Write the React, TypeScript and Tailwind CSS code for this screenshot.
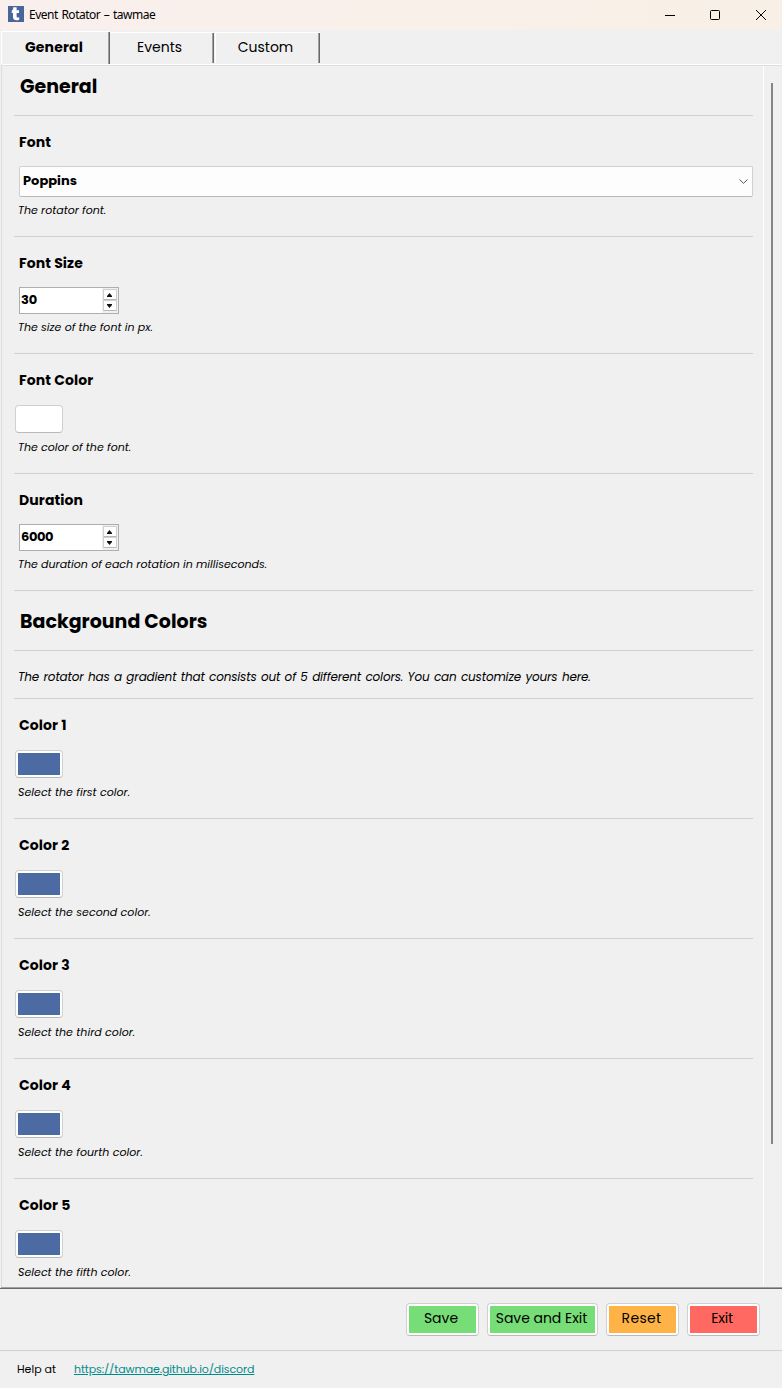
import type { ReactNode } from "react";

function Rule() {
  return <div className="h-px w-[739px] shrink-0 bg-[#d0d0d0]" />;
}

function Heading({ children, className }: { children: ReactNode; className: string }) {
  return (
    <h2 className={`flex shrink-0 items-center pl-[6px] text-[19px] leading-none font-bold ${className}`}>
      {children}
    </h2>
  );
}

interface FieldProps {
  label: string;
  hint: string;
  hintClass?: string;
  className: string;
  children: ReactNode;
}

function Field({ label, hint, hintClass = "", className, children }: FieldProps) {
  return (
    <section className={`flex shrink-0 flex-col ${className}`}>
      <div className="flex h-[50px] shrink-0 items-center pt-px pl-[5px] text-[14px] leading-none font-bold tracking-[0.1px]">
        {label}
      </div>
      {children}
      <p className={`flex h-[26px] shrink-0 items-center pl-[4px] text-[11px] leading-none whitespace-nowrap italic ${hintClass}`}>
        {hint}
      </p>
    </section>
  );
}

function Spinner({ value, valueClass }: { value: string; valueClass: string }) {
  return (
    <div className="ml-[5px] flex h-[27px] w-[100px] shrink-0 items-center justify-between border border-[#adadb3] bg-white">
      <span className={`-mt-[3px] pl-px text-[13px] leading-none font-bold ${valueClass}`}>{value}</span>
      <div className="flex h-[25px] w-[16px] flex-col bg-[#f0f0f0] p-px">
        <div className="flex h-[11px] items-center rounded-[1px] border border-[#d0d0d0] border-b-[#b8b8b8] bg-[#fdfdfd] pl-[3px]">
          <svg width="5" height="4" viewBox="0 0 5 4"><path d="M2.5 0 5 3V4H0V3Z" fill="#111" /></svg>
        </div>
        <div className="flex h-[11px] items-center rounded-[1px] border border-[#d0d0d0] border-b-[#b8b8b8] bg-[#fdfdfd] pl-[3px]">
          <svg width="5" height="4" viewBox="0 0 5 4"><path d="M0 0H5V1L2.5 4 0 1Z" fill="#111" /></svg>
        </div>
      </div>
    </div>
  );
}

function Swatch({ fill }: { fill: string }) {
  return (
    <div className="mt-px ml-px flex h-[28px] w-[48px] shrink-0 rounded-[4px] border border-[#d0d0d0] border-b-[#bababa] bg-white p-[2px]">
      <div className={`flex-1 ${fill}`} />
    </div>
  );
}

function ActionButton({ label, className, fill }: { label: string; className: string; fill: string }) {
  return (
    <button className={`flex h-[33px] rounded-[4px] border border-[#d0d0d0] border-b-[#bababa] bg-white p-[2px] ${className}`}>
      <span className={`flex h-full flex-1 items-center justify-center pb-[3px] text-[14px] leading-none whitespace-nowrap ${fill}`}>
        {label}
      </span>
    </button>
  );
}

function TabEdge() {
  return (
    <span className="flex w-[2px] shrink-0 self-stretch">
      <span className="w-px bg-[#a0a0a0]" />
      <span className="w-px bg-[#696969]" />
    </span>
  );
}

const colors = [
  { name: "Color 1", hint: "Select the first color." },
  { name: "Color 2", hint: "Select the second color." },
  { name: "Color 3", hint: "Select the third color." },
  { name: "Color 4", hint: "Select the fourth color." },
  { name: "Color 5", hint: "Select the fifth color." },
];

export default function App() {
  return (
    <div className="flex h-[1388px] w-[782px] flex-col overflow-hidden bg-[#f0f0f0] font-['Poppins','Inter',sans-serif] text-black [font-feature-settings:'cv11','ss03']">
      <header className="flex h-[30px] shrink-0 items-center bg-linear-to-r from-[#f9f0ee] via-[#f9f0ea] to-[#f8f0e6] pl-[8px]">
        <svg width="16" height="16" viewBox="0 0 16 16" className="-mt-[2px]">
          <rect width="16" height="16" fill="#48669c" />
          <path d="M5.2 1.3H8.6V4.3H11V6.9H8.6V10.2C8.6 11.6 9.6 11.8 11.2 11.2V13.7C8 15 5 14.2 5 11V6.9H3.7V4.8C4.8 4.3 5.2 3 5.2 1.3Z" fill="#fff" />
        </svg>
        <h1 className="ml-[5px] flex-1 text-[12px] leading-none tracking-[-0.5px] [word-spacing:1px] font-['Segoe_UI','Noto_Sans',sans-serif]">
          Event Rotator – tawmae
        </h1>
        <div className="flex items-center">
          <svg width="10" height="10" viewBox="0 0 10 10" className="mr-[35px]" fill="none" stroke="#000"><path d="M0 5.5H10" /></svg>
          <svg width="10" height="10" viewBox="0 0 10 10" className="mr-[36px]" fill="none" stroke="#000"><rect x=".5" y=".5" width="9" height="9" rx="1" /></svg>
          <svg width="10" height="10" viewBox="0 0 10 10" className="mr-[16px]" fill="none" stroke="#000"><path d="M0 0 10 10M10 0 0 10" /></svg>
        </div>
      </header>

      <nav className="flex h-[34px] shrink-0 items-end pl-px text-[14px] leading-none">
        <div className="flex h-[33px] w-[109px] border-t border-l border-t-white border-l-white">
          <span className="flex flex-1 items-center justify-center pr-[2px] pb-[3px] font-bold tracking-[0.15px]">General</span>
          <TabEdge />
        </div>
        <div className="mb-px flex h-[31px] w-[104px] border-t border-t-white">
          <span className="flex flex-1 items-center justify-center pr-[3px] pb-[3px]">Events</span>
          <TabEdge />
        </div>
        <div className="mb-px ml-px flex h-[31px] w-[105px] border-t border-l border-t-white border-l-white">
          <span className="flex flex-1 items-center justify-center pr-[3px] pb-[3px]">Custom</span>
          <TabEdge />
        </div>
      </nav>

      <main className="ml-px flex h-[1223px] shrink-0 overflow-hidden border-t border-l border-t-white border-l-[#dedede]">
        <div className="flex w-[761px] shrink-0 flex-col border-t border-t-[#dedede] pl-[12px]">
          <Heading className="h-[49px] pb-[8px]">General</Heading>
          <Rule />
          <Field label="Font" hint="The rotator font." className="h-[120px]">
            <div className="ml-[5px] flex h-[31px] w-[734px] shrink-0 items-center justify-between rounded-[2px] border border-[#d0d0d0] border-b-[#b8b8b8] bg-[#fdfdfd] pr-[4px] pl-[3px]">
              <span className="pb-[2px] text-[13px] leading-none font-bold">Poppins</span>
              <svg width="9" height="5" viewBox="0 0 9 5" fill="none" stroke="#555"><path d="M.5.5 4.5 4.3 8.5.5" /></svg>
            </div>
          </Field>
          <Rule />
          <Field label="Font Size" hint="The size of the font in px." className="h-[116px]">
            <Spinner value="30" valueClass="tracking-[-0.2px]" />
          </Field>
          <Rule />
          <Field label="Font Color" hint="The color of the font." hintClass="pt-[2px]" className="h-[119px]">
            <Swatch fill="bg-white" />
          </Field>
          <Rule />
          <Field label="Duration" hint="The duration of each rotation in milliseconds." className="h-[116px]">
            <Spinner value="6000" valueClass="tracking-[-0.4px]" />
          </Field>
          <Rule />
          <Heading className="h-[59px] pt-[2px]">Background Colors</Heading>
          <Rule />
          <p className="flex h-[47px] shrink-0 items-center pt-[4px] pl-[4px] text-[12px] leading-none tracking-[-0.16px] [word-spacing:1px] whitespace-nowrap italic">
            The rotator has a gradient that consists out of 5 different colors. You can customize yours here.
          </p>
          {colors.map((c) => (
            <div key={c.name} className="shrink-0">
              <Rule />
              <Field label={c.name} hint={c.hint} hintClass="pt-[2px] tracking-[0.04px]" className="h-[119px]">
                <Swatch fill="bg-[#4c6ba2]" />
              </Field>
            </div>
          ))}
        </div>
        <div className="flex flex-1 flex-col border-t border-t-[#dedede]">
          <div className="h-[1219px] w-[19px] border-l border-l-white pt-[17px] pl-[7px]">
            <div className="h-[1061px] w-[2px] bg-[#858585]" />
          </div>
        </div>
      </main>

      <footer className="flex flex-1 flex-col">
        <div className="ml-px h-px shrink-0 bg-[#a0a0a0]" />
        <div className="h-px shrink-0 bg-[#696969]" />
        <div className="flex h-[61px] shrink-0 items-start justify-end pt-[14px] pr-[22px]">
          <ActionButton label="Save" fill="bg-[#77dd77] pr-[3px]" className="mr-[8px] w-[73px]" />
          <ActionButton label="Save and Exit" fill="bg-[#77dd77] pr-[2px]" className="mr-[8px] w-[111px] tracking-[-0.03px]" />
          <ActionButton label="Reset" fill="bg-[#ffb347] pr-[2px]" className="mr-[8px] w-[73px] tracking-[0.3px]" />
          <ActionButton label="Exit" fill="bg-[#ff6961] pr-[3px]" className="w-[73px] tracking-[-0.2px]" />
        </div>
        <div className="flex flex-1 items-center border-t border-t-[#d0d0d0] pl-[17px] text-[11px] leading-none">
          <span className="w-[57px]">Help at</span>
          <a className="tracking-[-0.1px] text-[#008b8b] underline">https://tawmae.github.io/discord</a>
        </div>
      </footer>
    </div>
  );
}
